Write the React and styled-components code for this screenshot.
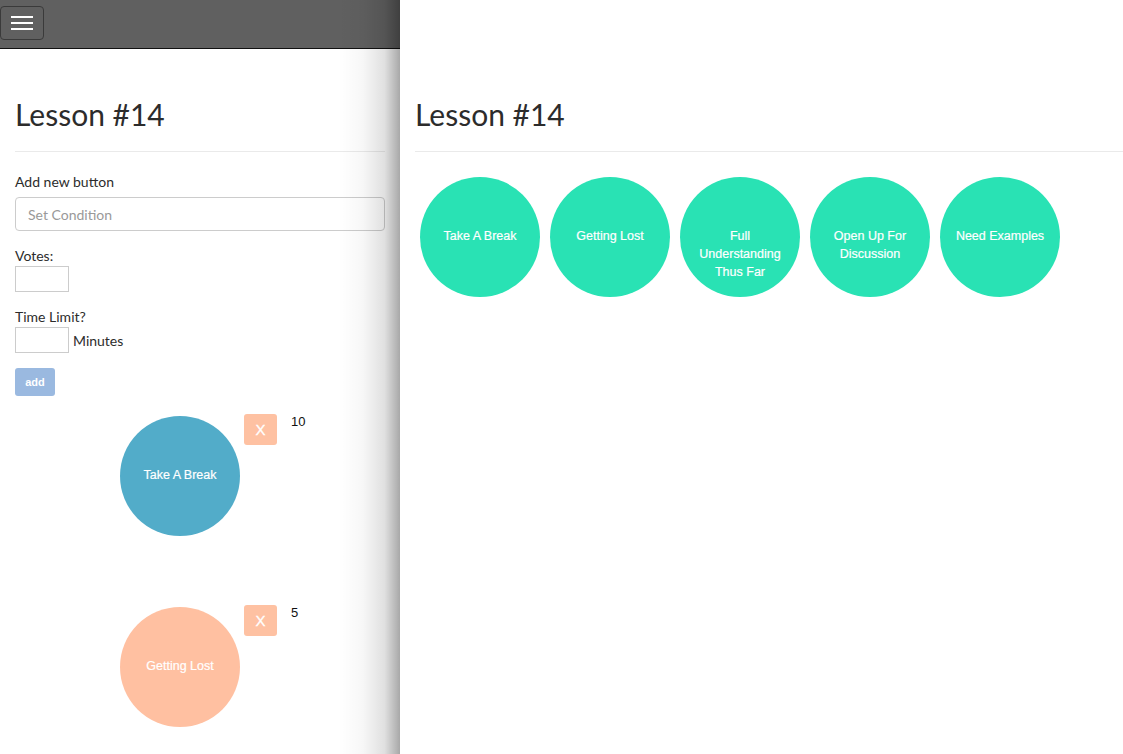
import React from 'react';
import styled, { createGlobalStyle } from 'styled-components';

const Global = createGlobalStyle`
  html, body { margin:0; padding:0; background:#fff; }
  body { font-family:Lato, "Helvetica Neue", Arial, sans-serif; color:#2c2c2c; }
  * { box-sizing:border-box; }
`

const Page = styled.div`
  display:flex; width:1123px; height:754px; overflow:hidden;
`
const Sidebar = styled.aside`
  position:relative; width:400px; flex:none; height:754px;
  &::after{
    content:''; position:absolute; top:0; right:0; bottom:0; width:62px;
    pointer-events:none;
    background:linear-gradient(to right, rgba(0,0,0,0) 0%, rgba(0,0,0,0.03) 40%, rgba(0,0,0,0.12) 75%, rgba(0,0,0,0.34) 100%);
  }
`
const Navbar = styled.nav`
  height:49px; background:#606060; border-bottom:1px solid #111;
  padding-top:6px;
`
const Toggle = styled.button`
  width:44px; height:34px; background:transparent;
  border:1px solid #3a3a3a; border-radius:4px; padding:0;
  display:flex; flex-direction:column; align-items:center; justify-content:center; gap:4px;
  span{ display:block; width:22px; height:2px; background:#fff; }
`
const Panel = styled.div`
  padding:0 15px;
`
const Title = styled.h1`
  font-family:Lato, sans-serif; font-weight:400; font-size:30px; line-height:33px;
  margin:49px 0 0; color:#2c2c2c;
`
const Rule = styled.hr`
  border:0; border-top:1px solid #eaeaea; margin:20px 0 0;
`
const Label = styled.label`
  display:block; font-size:14px; line-height:20px; color:#2c2c2c;
  margin-top:${p => p.$top || 0}px;
`
const TextInput = styled.input`
  display:block; width:100%; height:34px; margin-top:5px;
  border:1px solid #ccc; border-radius:4px; padding:6px 12px;
  font-family:Lato, sans-serif; font-size:14px; color:#555;
  &::placeholder{ color:#999; }
`
const SmallInput = styled.input`
  width:54px; height:26px; border:1px solid #ccc; border-radius:0; padding:0 4px;
  margin:0; vertical-align:middle;
`
const InlineRow = styled.div`
  display:flex; align-items:center; gap:4px; margin-top:${p => p.$top || 0}px;
  font-size:14px;
`
const AddButton = styled.button`
  margin-top:15px; width:40px; height:28px; border:0; border-radius:3px;
  background:#9ab9e0; color:#fff; font-family:"Liberation Sans", Arial, sans-serif;
  font-weight:bold; font-size:11px; padding:0;
`
const VoteRow = styled.div`
  display:flex; align-items:flex-start; padding-left:105px;
  margin-top:${p => p.$top}px;
`
const Circle = styled.div`
  width:120px; height:120px; border-radius:50%; flex:none;
  background:${p => p.$bg}; color:#fff; text-align:center;
  font-family:"Liberation Sans", Arial, sans-serif; font-size:12.5px; line-height:18px;
  padding:50px 12px 0; margin-top:${p => p.$top || 0}px;
  -webkit-text-stroke:0.2px #fff;
`
const XButton = styled.button`
  width:33px; height:31px; margin-left:4px; border:0; border-radius:3px;
  background:#fec1a2; color:#fff; font-family:"Liberation Sans", Arial, sans-serif;
  font-size:15px; padding:0; -webkit-text-stroke:0.3px #fff;
`
const Count = styled.span`
  margin-left:14px; font-family:"Liberation Sans", Arial, sans-serif;
  font-size:13px; line-height:16px; color:#111;
`
const Main = styled.main`
  flex:1; padding:49px 0 0 15px;
`
const MainRule = styled.hr`
  border:0; border-top:1px solid #eaeaea; margin:20px 0 0;
`
const CircleRow = styled.div`
  display:flex; gap:10px; padding:25px 0 0 5px;
`

const choices = [
  'Take A Break',
  'Getting Lost',
  'Full Understanding Thus Far',
  'Open Up For Discussion',
  'Need Examples',
];

const App = () => {
  return (
    <Page>
      <Global />
      <Sidebar>
        <Navbar>
          <Toggle aria-label="menu"><span /><span /><span /></Toggle>
        </Navbar>
        <Panel>
          <Title>Lesson #14</Title>
          <Rule />
          <Label $top={20}>Add new button</Label>
          <TextInput placeholder="Set Condition" />
          <Label $top={15}>Votes:</Label>
          <InlineRow><SmallInput /></InlineRow>
          <Label $top={15}>Time Limit?</Label>
          <InlineRow><SmallInput /> Minutes</InlineRow>
          <AddButton>add</AddButton>
          <VoteRow $top={18}>
            <Circle $bg="#52acc9" $top={2}>Take A Break</Circle>
            <XButton>X</XButton>
            <Count>10</Count>
          </VoteRow>
          <VoteRow $top={69}>
            <Circle $bg="#ffc0a1" $top={2}>Getting Lost</Circle>
            <XButton>X</XButton>
            <Count>5</Count>
          </VoteRow>
        </Panel>
      </Sidebar>
      <Main>
        <Title>Lesson #14</Title>
        <MainRule />
        <CircleRow>
          {choices.map(c => (
            <Circle key={c} $bg="#29e2b4">{c}</Circle>
          ))}
        </CircleRow>
      </Main>
    </Page>
  );
};

export default App;
